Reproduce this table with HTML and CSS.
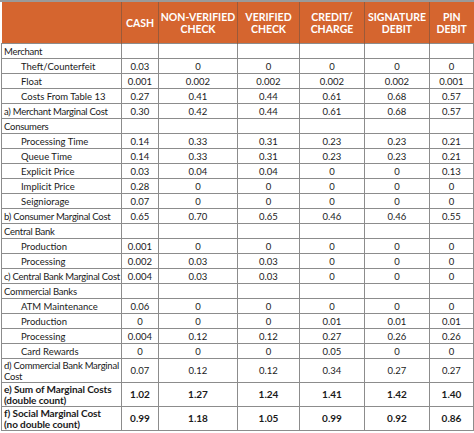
FILE: index.html
```html
<!DOCTYPE html>
<html>
<head>
<meta charset="utf-8">
<link rel="stylesheet" href="styles.css">
</head>
<body>
<div class="frame">
<table class="costs">
<colgroup>
<col class="c-label"><col class="c-cash"><col class="c-nv"><col class="c-ver"><col class="c-cred"><col class="c-sig"><col class="c-pin">
</colgroup>
<thead>
<tr class="head">
<th class="blank"></th>
<th>CASH</th>
<th>NON-VERIFIED<br>CHECK</th>
<th>VERIFIED<br>CHECK</th>
<th>CREDIT/<br>CHARGE</th>
<th>SIGNATURE<br>DEBIT</th>
<th>PIN<br>DEBIT</th>
</tr>
</thead>
<tbody>
<tr><td class="grp">Merchant</td><td></td><td></td><td></td><td></td><td></td><td></td></tr>
<tr><td class="sub">Theft/Counterfeit</td><td>0.03</td><td>0</td><td>0</td><td>0</td><td>0</td><td>0</td></tr>
<tr><td class="sub">Float</td><td>0.001</td><td>0.002</td><td>0.002</td><td>0.002</td><td>0.002</td><td>0.001</td></tr>
<tr><td class="sub">Costs From Table 13</td><td>0.27</td><td>0.41</td><td>0.44</td><td>0.61</td><td>0.68</td><td>0.57</td></tr>
<tr><td class="grp">a) Merchant Marginal Cost</td><td>0.30</td><td>0.42</td><td>0.44</td><td>0.61</td><td>0.68</td><td>0.57</td></tr>
<tr><td class="grp">Consumers</td><td></td><td></td><td></td><td></td><td></td><td></td></tr>
<tr><td class="sub">Processing Time</td><td>0.14</td><td>0.33</td><td>0.31</td><td>0.23</td><td>0.23</td><td>0.21</td></tr>
<tr><td class="sub">Queue Time</td><td>0.14</td><td>0.33</td><td>0.31</td><td>0.23</td><td>0.23</td><td>0.21</td></tr>
<tr><td class="sub">Explicit Price</td><td>0.03</td><td>0.04</td><td>0.04</td><td>0</td><td>0</td><td>0.13</td></tr>
<tr><td class="sub">Implicit Price</td><td>0.28</td><td>0</td><td>0</td><td>0</td><td>0</td><td>0</td></tr>
<tr><td class="sub">Seigniorage</td><td>0.07</td><td>0</td><td>0</td><td>0</td><td>0</td><td>0</td></tr>
<tr><td class="grp">b) Consumer Marginal Cost</td><td>0.65</td><td>0.70</td><td>0.65</td><td>0.46</td><td>0.46</td><td>0.55</td></tr>
<tr><td class="grp">Central Bank</td><td></td><td></td><td></td><td></td><td></td><td></td></tr>
<tr><td class="sub">Production</td><td>0.001</td><td>0</td><td>0</td><td>0</td><td>0</td><td>0</td></tr>
<tr><td class="sub">Processing</td><td>0.002</td><td>0.03</td><td>0.03</td><td>0</td><td>0</td><td>0</td></tr>
<tr><td class="grp">c) Central Bank Marginal Cost</td><td>0.004</td><td>0.03</td><td>0.03</td><td>0</td><td>0</td><td>0</td></tr>
<tr><td class="grp">Commercial Banks</td><td></td><td></td><td></td><td></td><td></td><td></td></tr>
<tr><td class="sub">ATM Maintenance</td><td>0.06</td><td>0</td><td>0</td><td>0</td><td>0</td><td>0</td></tr>
<tr><td class="sub">Production</td><td>0</td><td>0</td><td>0</td><td>0.01</td><td>0.01</td><td>0.01</td></tr>
<tr><td class="sub">Processing</td><td>0.004</td><td>0.12</td><td>0.12</td><td>0.27</td><td>0.26</td><td>0.26</td></tr>
<tr><td class="sub">Card Rewards</td><td>0</td><td>0</td><td>0</td><td>0.05</td><td>0</td><td>0</td></tr>
<tr class="tall"><td class="grp">d) Commercial Bank Marginal<br>Cost</td><td>0.07</td><td>0.12</td><td>0.12</td><td>0.34</td><td>0.27</td><td>0.27</td></tr>
<tr class="tall bold"><td class="grp">e) Sum of Marginal Costs<br>(double count)</td><td>1.02</td><td>1.27</td><td>1.24</td><td>1.41</td><td>1.42</td><td>1.40</td></tr>
<tr class="tall bold"><td class="grp">f) Social Marginal Cost<br>(no double count)</td><td>0.99</td><td>1.18</td><td>1.05</td><td>0.99</td><td>0.92</td><td>0.86</td></tr>
</tbody>
</table>
</div>
</body>
</html>
```
FILE: styles.css
```css
html, body {
  margin: 0;
  padding: 0;
  background: #ffffff;
}
.frame {
  width: 474px;
  height: 433px;
  box-sizing: border-box;
  border-top: 2px solid #9a9a9a;
  padding-left: 1px;
}
.costs {
  border-collapse: collapse;
  table-layout: fixed;
  width: 472px;
  font-family: Lato, "Liberation Sans", sans-serif;
  font-size: 9.5px;
  color: #1a1a1a;
}
.c-label { width: 120px; }
.c-cash { width: 37px; }
.c-nv { width: 79px; }
.c-ver { width: 62px; }
.c-cred { width: 65px; }
.c-sig { width: 65px; }
.c-pin { width: 44px; }
.head th {
  background: #d5652f;
  color: #ffffff;
  font-weight: 700;
  font-size: 10.5px;
  line-height: 12px;
  height: 41px;
  padding: 0;
  border-left: 1px solid #9a5a3a;
  text-align: center;
  vertical-align: middle;
  white-space: nowrap;
}
.head th.blank { border-left: none; }
.costs td {
  border: 1px solid #8c8c8c;
  height: 14px;
  padding: 0;
  text-align: center;
  vertical-align: middle;
  line-height: 11px;
  white-space: nowrap;
}
.costs td.grp {
  text-align: left;
  padding-left: 2px;
  letter-spacing: -0.25px;
}
.costs td.sub {
  text-align: left;
  padding-left: 19px;
}
.costs tr.tall td {
  height: 23px;
}
.costs tr.bold td {
  font-weight: 700;
  font-size: 10px;
}
.costs tr.bold td.grp {
  letter-spacing: -0.1px;
}
```
